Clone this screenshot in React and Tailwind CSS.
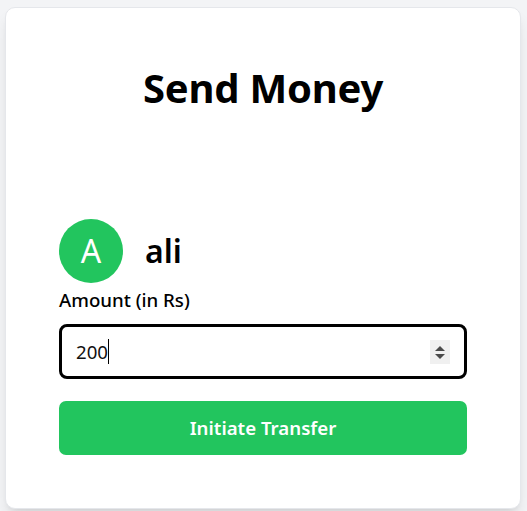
import React from 'react';

const Spinner = () => (
  <div className="w-[20px] h-[24px] bg-[#f0f0f0] flex items-center justify-center">
    <svg width="12" height="18" viewBox="0 0 12 18">
      <path d="M6 3 L11 8 L1 8 Z" fill="#4a4a4a" />
      <path d="M1 11 L11 11 L6 16 Z" fill="#4a4a4a" />
    </svg>
  </div>
);

export default function App() {
  return (
    <div className="min-h-screen bg-gray-100 flex pl-[5px] pt-[7px] font-['Noto_Sans',sans-serif]">
      <div className="w-[516px] h-min bg-white border border-gray-200 rounded-[10px] shadow-lg px-[53px] pt-[56px] pb-[53px]">
        {/* Header */}
        <h2 className="text-[40px] leading-[48px] font-bold text-center text-black tracking-[-0.2px]">Send Money</h2>

        {/* Recipient */}
        <div className="mt-[107px] flex items-center gap-[22px]">
          <div className="w-16 h-16 rounded-full bg-[#22c55e] flex items-center justify-center">
            <span className="text-[32px] leading-[40px] text-white">A</span>
          </div>
          <h3 className="text-[32px] leading-[40px] font-semibold text-black">ali</h3>
        </div>

        {/* Amount */}
        <label className="block mt-[3px] text-[18.67px] leading-[27px] font-medium text-black">
          Amount (in Rs)
        </label>
        <div className="mt-[11px] h-[55px] border-[3px] border-black rounded-[8px] flex items-center justify-between px-[14px]">
          <div className="flex items-center text-[18.67px] text-[#111]">
            <span>200</span>
            <span className="w-px h-[25px] bg-black" />
          </div>
          <Spinner />
        </div>

        <button className="mt-[22px] w-full h-[54px] rounded-[7px] bg-[#22c55e] text-white text-[18.67px] font-semibold flex items-center justify-center">
          Initiate Transfer
        </button>
      </div>
    </div>
  );
}
